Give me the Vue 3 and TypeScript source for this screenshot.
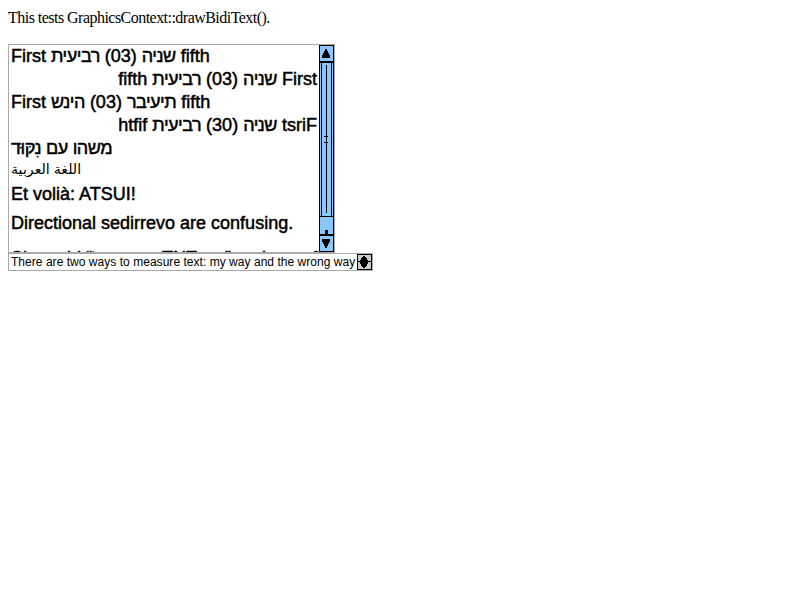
<script setup lang="ts">
interface Run { text: string; hebrew: boolean }
interface Row { runs: Run[]; cls: string; dir: 'ltr' | 'rtl' }
const split = (text: string): Run[] =>
  text.split(/([\u0590-\u05ff]+)/).filter(Boolean).map(t => ({ text: t, hebrew: /[\u0590-\u05ff]/.test(t) }))
const mixed = split('First שניה (03) רביעית fifth')
const rows: Row[] = [
  { runs: mixed, cls: 'm1', dir: 'ltr' },
  { runs: mixed, cls: 'm2', dir: 'rtl' },
  { runs: mixed, cls: 'm3 override', dir: 'ltr' },
  { runs: mixed, cls: 'm4 override', dir: 'rtl' },
  { runs: split('משהו עם נִקּוּד'), cls: 'pointed', dir: 'ltr' },
  { runs: split('اللغة العربية'), cls: 'arabic', dir: 'ltr' },
  { runs: split('Et volià: ATSUI!'), cls: 'latin', dir: 'ltr' },
]
const quote = split('She said “אני אוכל TNT חם” and ran off')
</script>

<template>
  <main class="page">
    <p class="intro">This tests GraphicsContext::drawBidiText().</p>
    <div class="list">
      <div class="options">
        <div v-for="row in rows" :key="row.cls" class="row" :class="row.cls" :dir="row.dir"><span v-for="(run, i) in row.runs" :key="i" :class="{ hebrew: run.hebrew }">{{ run.text }}</span></div>
        <div class="row directional">Directional <bdo dir="rtl">overrides</bdo> are confusing.</div>
        <div class="row last"><span v-for="(run, i) in quote" :key="i" :class="{ hebrew: run.hebrew }">{{ run.text }}</span></div>
      </div>
      <svg class="bar" width="15" height="207" viewBox="0 0 15 207" shape-rendering="crispEdges">
        <rect width="15" height="207" fill="#000" />
        <rect x="1" y="1" width="13" height="15" fill="#8ac6ff" />
        <path d="M6 4h2v2h1v2h1v2h1v3H3v-3h1V8h1V6h1z" fill="#000" />
        <rect x="1" y="18" width="1" height="153" fill="#8ac6ff" />
        <rect x="3" y="18" width="9" height="153" fill="#8ac6ff" />
        <rect x="13" y="18" width="1" height="153" fill="#8ac6ff" />
        <path d="M7 20h1v148H7zM5 91h4v1H5zM5 97h4v1H5z" fill="#000" />
        <rect x="1" y="172" width="13" height="17" fill="#8ac6ff" />
        <rect x="6" y="185" width="3" height="4" fill="#000" />
        <rect x="1" y="191" width="13" height="15" fill="#8ac6ff" />
        <path d="M3 194h8v3h-1v2H9v2H8v2H6v-2H5v-2H4v-2H3z" fill="#000" />
      </svg>
    </div>
    <div class="menu">
      <span class="menu-text">There are two ways to measure text: my way and the wrong way</span>
      <svg class="stepper" width="15" height="16" viewBox="0 0 15 16" shape-rendering="crispEdges">
        <path d="M0 0h15v16H0z" fill="#000" />
        <path d="M1 1h13v14H1z" fill="#ccc" />
        <path d="M6 2h2v1h1v1h1v2h1v1h3v1h-3v2h-1v2H9v1H8v1H6v-1H5v-1H4v-2H3V8H1V7h2V6h1V4h1V3h1z" fill="#000" />
      </svg>
    </div>
  </main>
</template>

<style>
body { background: #fff; color: #000; }
</style>
<style scoped>
.page { padding: 8px; font-family: "Liberation Sans", "DejaVu Sans", sans-serif; }
.intro { margin: 0; height: 36px; font: 16px/20px "Liberation Serif", serif; letter-spacing: -0.53px; }
.list { box-sizing: border-box; width: 327px; height: 209px; border: 1px solid #a9a9a9; display: flex; overflow: hidden; }
.options { width: 310px; height: 207px; overflow: hidden; flex: none; }
.bar { flex: none; display: block; }
.row { height: 23px; padding: 0 2px; line-height: 23px; font-size: 18px; white-space: nowrap; -webkit-text-stroke: 0.5px #000; }
.hebrew { letter-spacing: -0.5px; }
.override, .override span { unicode-bidi: bidi-override; }
.override span { unicode-bidi: normal; }
.row.arabic { font-size: 14.2px; line-height: 18px; height: 21px; text-align: left; -webkit-text-stroke: 0; }
.row.latin { height: 26px; line-height: 26px; }
.row.directional { height: 32px; line-height: 32px; }
.row.last { height: 38px; line-height: 38px; }
.last .hebrew { font-size: 15px; letter-spacing: 1.7px; }
.menu { box-sizing: border-box; width: 365px; height: 18px; border: 1px solid #a9a9a9; display: flex; justify-content: space-between; }
.menu-text { padding-left: 2px; font-size: 12px; line-height: 16px; letter-spacing: 0.035px; white-space: nowrap; }
.stepper { display: block; flex: none; }
</style>
